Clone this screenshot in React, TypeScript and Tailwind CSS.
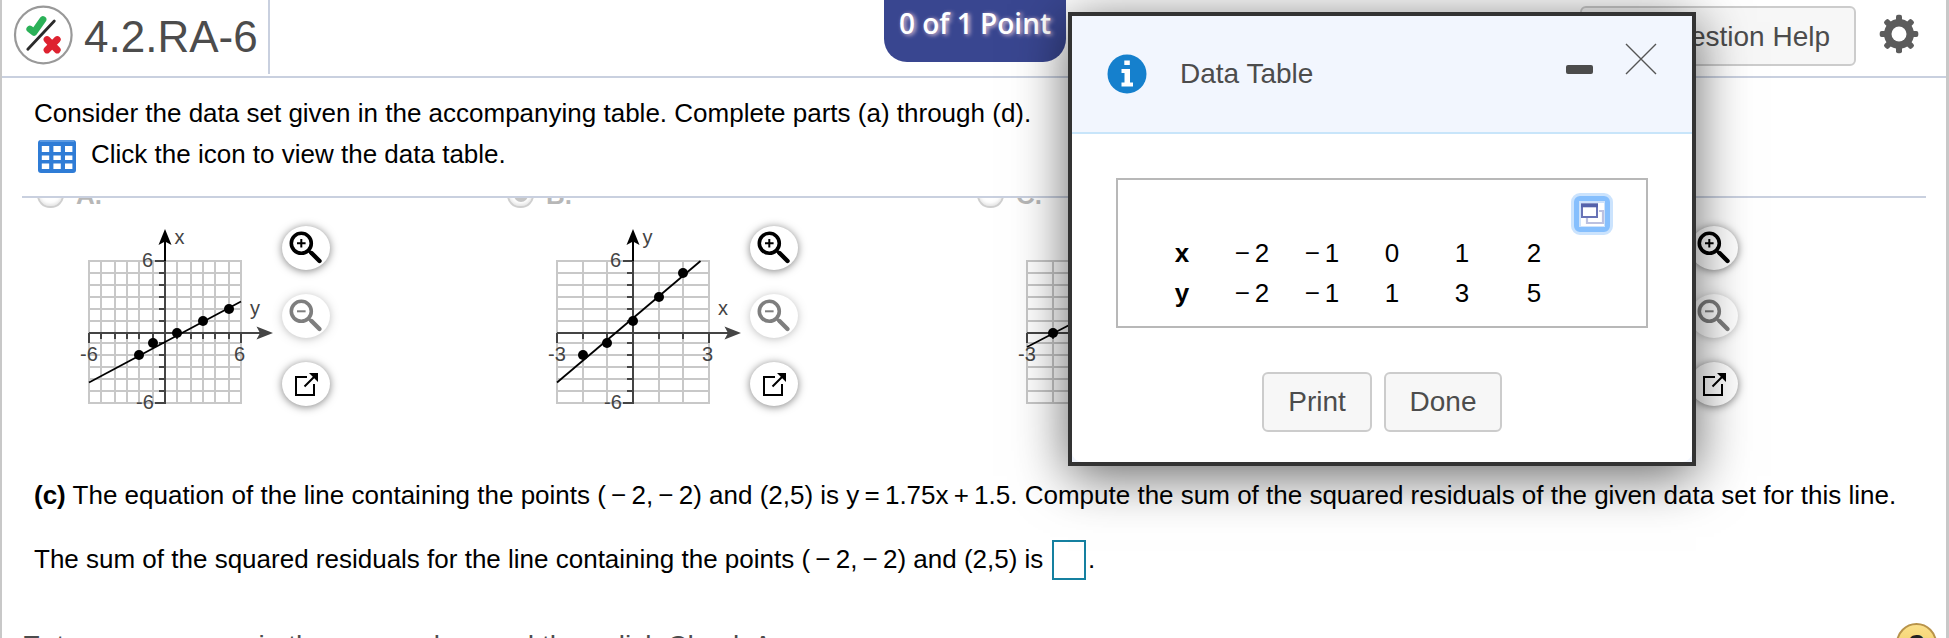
import React from 'react';

interface GraphProps {
  columns: number[];
  xLimit: string;
  verticalName: string;
  horizontalName: string;
  line: string;
  points: number[][];
}

interface OptionProps extends GraphProps {
  letter: string;
  checked?: boolean;
}

const ROWS = [261, 273, 285, 297, 309, 321, 333, 343, 355, 367, 379, 391, 403];
const FINE_COLUMNS = [89, 101, 115, 127, 139, 153, 165, 177, 191, 203, 215, 229, 241];
const WIDE_COLUMNS = [89, 115, 139, 165, 191, 215, 241];

const OPTIONS: OptionProps[] = [
  {
    letter: 'A',
    columns: FINE_COLUMNS,
    xLimit: '6',
    verticalName: 'x',
    horizontalName: 'y',
    line: 'M89 382.5L241 301.5',
    points: [[139, 355], [153, 343], [177, 333], [203, 321], [229, 309]],
  },
  {
    letter: 'B',
    checked: true,
    columns: WIDE_COLUMNS,
    xLimit: '3',
    verticalName: 'y',
    horizontalName: 'x',
    line: 'M89 382.5L232.5 261',
    points: [[115, 355], [139, 343], [165, 321], [191, 297], [215, 273]],
  },
  {
    letter: 'C',
    columns: WIDE_COLUMNS,
    xLimit: '3',
    verticalName: 'y',
    horizontalName: 'x',
    line: 'M89 347L241 268',
    points: [[115, 333], [139, 321], [165, 309], [191, 297], [215, 285]],
  },
  {
    letter: 'D',
    columns: FINE_COLUMNS,
    xLimit: '6',
    verticalName: 'y',
    horizontalName: 'x',
    line: 'M89 382.5L241 301.5',
    points: [[139, 343], [165, 333], [191, 321]],
  },
];

const TABLE = [
  { name: 'x', values: [-2, -1, 0, 1, 2] },
  { name: 'y', values: [-2, -1, 1, 3, 5] },
];

const Op: React.FC<{ children: React.ReactNode }> = ({ children }) => (
  <span className="mx-[5.200px]">{children}</span>
);

const Graph: React.FC<GraphProps> = ({ columns, xLimit, verticalName, horizontalName, line, points }) => (
  <svg width="206" height="200" viewBox="74 220 206 200" className="shrink-0">
    <g stroke="#c8c8c8" strokeWidth="2">
      {columns.map((x) => <path key={x} d={`M${x} 260V404`} />)}
      {ROWS.map((y) => <path key={y} d={`M88 ${y}H242`} />)}
    </g>
    <g stroke="#444" strokeWidth="2">
      <path d="M165 261V404M89 333H262M155 261H165M155 403H165M89 333V343M241 333V343" />
      {columns.map((x) => <path key={x} d={`M${x} 333V339`} />)}
      {ROWS.map((y) => <path key={y} d={`M159 ${y}H165`} />)}
    </g>
    <path d="M165 261V240" stroke="#000" strokeWidth="2" />
    <path d="M165 229L171.5 245L165 241.5L158.5 245Z" fill="#000" />
    <path d="M273 333L256.5 339.5L260 333L256.5 326.5Z" fill="#444" />
    <path d={line} stroke="#000" strokeWidth="1.8" />
    {points.map(([x, y]) => <circle key={x} cx={x} cy={y} r="5" />)}
    <g fill="#444" fontSize="20" fontFamily="Liberation Sans, Arial, sans-serif">
      <text x="142" y="267">6</text>
      <text x="136" y="409">-6</text>
      <text x="80" y="361">-{xLimit}</text>
      <text x="234" y="361">{xLimit}</text>
      <text x="174.500" y="243.500">{verticalName}</text>
      <text x="250" y="315">{horizontalName}</text>
    </g>
  </svg>
);

const Magnifier: React.FC<{ sign: string }> = ({ sign }) => (
  <svg width="48" height="44" fill="none" stroke="#000">
    <circle cx="19.3" cy="17.3" r="10" strokeWidth="3.6" />
    <path d="M27 25L30 28" strokeWidth="3" />
    <path d="M29.5 27L37.5 35" strokeWidth="4.4" strokeLinecap="round" />
    <path d={sign} strokeWidth="2" />
  </svg>
);

const ROUND = 'w-[48px] h-[44px] rounded-[50%] bg-white shadow-[0_1px_9px_rgba(0,0,0,0.5)]';

const Tools: React.FC = () => (
  <div className="ml-[2px] flex flex-col gap-6 pt-[6px]">
    <button className={ROUND}><Magnifier sign="M15 17.300H23.600M19.300 13V21.600" /></button>
    <button className={`${ROUND} opacity-50`}><Magnifier sign="M15 17.300H23.600" /></button>
    <button className={ROUND}>
      <svg width="48" height="44" fill="none" stroke="#000" strokeWidth="2">
        <path d="M25 15H14V33H32V22M22.500 24.500L32 15" />
        <path d="M27 11H36V20Z" fill="#000" stroke="none" />
      </svg>
    </button>
  </div>
);

const Option: React.FC<OptionProps> = ({ letter, checked, ...graph }) => (
  <div className="-mt-[18px]">
    <div className={`flex h-[40px] items-start gap-[12px] opacity-[0.28] ${letter === 'A' ? '' : 'ml-[2px]'}`}>
      <div className="mt-[2px] flex h-[26px] w-[27px] items-center justify-center rounded-full border-[2.500px] border-[#555] shadow-[inset_0_-2px_3px_#aaa]">
        {checked && <div className="h-[14px] w-[14px] rounded-full bg-[#333]" />}
      </div>
      <span className="text-[26px] leading-[30px] font-bold">{letter}.</span>
    </div>
    <div className="ml-[37px] flex">
      <Graph {...graph} />
      <Tools />
    </div>
  </div>
);

const Header: React.FC = () => (
  <header className="flex h-[78px] items-start border-b-2 border-[#c9d0df]">
    <div className="flex h-[74px] w-[268px] border-r-2 border-[#c9d0df] pt-[5px] pl-[11px]">
      <svg width="60" height="60" viewBox="13 5 60 60" fill="none" strokeLinecap="round" className="shrink-0">
        <circle cx="43.300" cy="35" r="28.300" stroke="#999" strokeWidth="2.200" />
        <path d="M29.800 29L34 32.300L43 19.500" stroke="#2bb158" strokeWidth="6.800" strokeLinejoin="round" />
        <path d="M27.800 49.300L54.300 21" stroke="#2b2b2b" strokeWidth="2.800" />
        <path d="M47 39.500L57.300 50M57.300 39.500L47 50" stroke="#de2230" strokeWidth="6.800" />
      </svg>
      <h1 className="mt-[2px] ml-[11px] text-[44px] leading-[60px] whitespace-nowrap text-[#4c4c4c]">4.2.RA-6</h1>
    </div>
    <div className="ml-[614px] flex h-[62px] w-[182px] justify-center rounded-b-[23px] bg-[#394690]">
      <span className="font-['Open_Sans'] text-[28px] leading-[46px] font-semibold whitespace-nowrap text-white [text-shadow:2px_1px_4px_#e8c8d8]">
        0 of 1 Point
      </span>
    </div>
    <button className="mt-[6px] ml-[514px] h-[60px] w-[276px] rounded-[6px] border-2 border-[#ccc] bg-[#f7f7f7] pt-[2px] pr-[24px] text-right text-[28px] text-[#4c4c4c]">
      Question Help
    </button>
    <svg width="40" height="40" viewBox="-20 -20 40 40" className="mt-[14px] ml-[23px] shrink-0">
      <g fill="#5c5c5c">
        {[0, 45, 90, 135].map((angle) => (
          <rect key={angle} x="-3" y="-19.300" width="6" height="38.600" rx="2" transform={`rotate(${angle})`} />
        ))}
        <circle r="15" />
      </g>
      <circle r="7.500" fill="#fff" />
    </svg>
  </header>
);

const DataTableDialog: React.FC = () => (
  <div className="absolute top-[12px] left-[1066px] flex h-[454px] w-[628px] flex-col border-4 border-[#333] bg-[#f2f6fe] text-[#4c4c4c] shadow-[0_10px_50px_rgba(0,0,0,0.600)]">
    <div className="flex h-[118px] shrink-0 items-start border-b-2 border-[#c8e5fa] pl-[35px]">
      <svg width="40" height="40" className="mt-[38px]">
        <circle cx="20" cy="20" r="19.500" fill="#1580cd" />
        <path d="M17.300 6.500H22.800V11H17.300ZM14.500 15H23V28.500H26V32.500H14.500V28.500H17.500V19H14.500Z" fill="#fff" />
      </svg>
      <h2 className="mt-[42px] ml-[33px] w-[386px] text-[28px] leading-[32px]">Data Table</h2>
      <div className="mt-[49px] h-[9px] w-[27px] rounded-[2px] bg-[#4c4c4c]" />
      <svg width="32" height="32" className="mt-[27px] ml-[32px]" stroke="#555" strokeWidth="1.400">
        <path d="M1 1L31 31M31 1L1 31" />
      </svg>
    </div>
    <div className="flex-1 rounded-b-[10px] bg-white pt-[44px]">
      <div className="relative ml-[44px] h-[150px] w-[532px] border-2 border-[#b8b8b8] pt-[53px] text-[26px] text-black">
        <div className="absolute top-[13px] right-[33px] h-[42px] w-[42px] rounded-[9px] border-[3px] border-[#cbe3fd] bg-[#86bffd] p-[5px]">
          <svg width="26" height="26">
            <rect width="26" height="26" fill="#cfe3fb" />
            <rect x="2" y="2" width="23" height="23" fill="#fff" />
            <path d="M8 16V22H24V10H20" fill="none" stroke="#bcc1e0" strokeWidth="2.200" />
            <path d="M3 4H18V16H3Z" fill="#fff" stroke="#6873b6" strokeWidth="2" />
            <path d="M2 4.300H19" stroke="#5462ab" strokeWidth="4" />
          </svg>
        </div>
        {TABLE.map((row) => (
          <div key={row.name} className="ml-[28px] grid h-[40px] grid-cols-[72px_68px_72px_68px_72px_72px] text-center leading-[40px]">
            <b>{row.name}</b>
            {row.values.map((value, idx) => (
              <span key={idx}>
                {value < 0 && <span className="mr-[5px]">−</span>}
                {Math.abs(value)}
              </span>
            ))}
          </div>
        ))}
      </div>
      <div className="mt-[44px] ml-[190px] flex gap-3 text-[28px]">
        <button className="h-[60px] w-[110px] rounded-[6px] border-2 border-[#ccc] bg-[#f7f7f7]">Print</button>
        <button className="h-[60px] w-[118px] rounded-[6px] border-2 border-[#ccc] bg-[#f7f7f7]">Done</button>
      </div>
    </div>
  </div>
);

export default function App() {
  return (
    <div className="relative h-[638px] w-[1949px] overflow-hidden border-r-[3px] border-l-2 border-[#c8c8c8] bg-white font-['Liberation_Sans',Arial,sans-serif] text-black">
      <Header />
      <main className="text-[26px] leading-[30px] whitespace-nowrap">
        <p className="mt-[20px] ml-[32px]">
          Consider the data set given in the accompanying table. Complete parts (a) through (d).
        </p>
        <div className="mt-[11px] ml-[36px] flex h-[57px]">
          <svg width="38" height="34" className="mt-px mr-[15px]">
            <rect width="38" height="33" rx="3" fill="#2f7cd6" />
            <path d="M2 1H36" stroke="#5c9ae2" strokeWidth="2" />
            {[3.8, 15.4, 27].map((x) => (
              <g key={x} fill="#fff">
                <rect x={x} y="6" width="7.400" height="6" />
                <rect x={x} y="15.500" width="7.400" height="4.500" />
                <rect x={x} y="23.500" width="7.400" height="5.500" />
              </g>
            ))}
          </svg>
          <p>Click the icon to view the data table.</p>
        </div>
        <div className="mr-[20px] ml-[20px] h-[2px] bg-[#c9d0df]" />

        <div className="grid h-[282px] grid-cols-[468px_470px_470px_1fr] overflow-hidden pl-[35px]">
          {OPTIONS.map((option) => <Option key={option.letter} {...option} />)}
        </div>

        <p className="ml-[32px]">
          <b>(c)</b> The equation of the line containing the points (<Op>−</Op>2,<Op>−</Op>2) and (2,5) is y<Op>=</Op>1.75x<Op>+</Op>1.5.
          {' '}Compute the sum of the squared residuals of the given data set for this line.
        </p>
        <div className="mt-[30px] ml-[32px] flex h-[40px]">
          <p className="mt-[4px] w-[1018px]">
            The sum of the squared residuals for the line containing the points (<Op>−</Op>2,<Op>−</Op>2) and (2,5) is
          </p>
          <input className="h-[40px] w-[34px] border-2 border-[#1580a0]" />
          <span className="mt-[4px] ml-[2px]">.</span>
        </div>
      </main>
      <footer className="flex justify-between pt-[43px] pr-[9px] pl-[20px] whitespace-nowrap">
        <p className="mt-[7px] text-[28px] leading-[32px] tracking-[0.080px] text-[#4c4c4c]">
          Enter your answer in the answer box and then click Check Answer.
        </p>
        <div className="h-[41px] w-[41px] rounded-full border-2 border-[#b8934a] bg-linear-to-b from-[#fbe08a] to-[#f0c95b] pt-[4px] text-center text-[28px] leading-[32px] font-bold text-[#222]">
          ?
        </div>
      </footer>
      <DataTableDialog />
    </div>
  );
}
